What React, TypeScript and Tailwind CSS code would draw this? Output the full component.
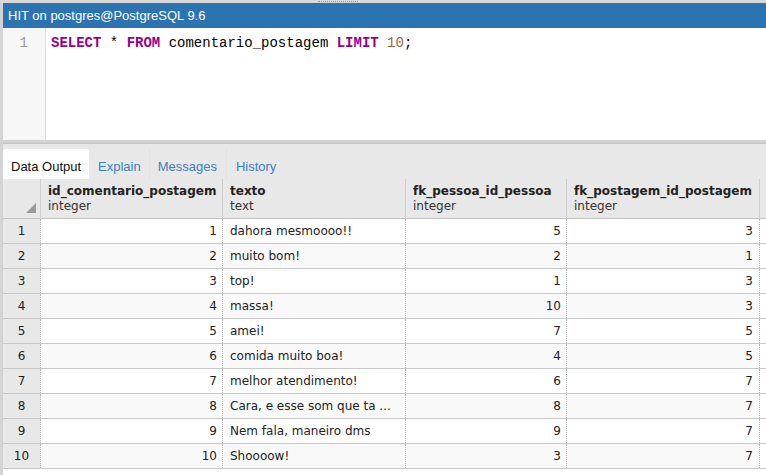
import React from 'react';

type Row = [number, string, number, number];

const rows: Row[] = [
  [1, 'dahora mesmoooo!!', 5, 3],
  [2, 'muito bom!', 2, 1],
  [3, 'top!', 1, 3],
  [4, 'massa!', 10, 3],
  [5, 'amei!', 7, 5],
  [6, 'comida muito boa!', 4, 5],
  [7, 'melhor atendimento!', 6, 7],
  [8, 'Cara, e esse som que ta ...', 8, 7],
  [9, 'Nem fala, maneiro dms', 9, 7],
  [10, 'Shoooow!', 3, 7],
];

const columns = [
  { name: 'id_comentario_postagem', type: 'integer', w: 'w-[182px]' },
  { name: 'texto', type: 'text', w: 'w-[183px]' },
  { name: 'fk_pessoa_id_pessoa', type: 'integer', w: 'w-[161px]' },
  { name: 'fk_postagem_id_postagem', type: 'integer', w: 'w-[193px]' },
];

const tabs = [
  { label: 'Explain', pad: 'pl-[9px] pr-[8px] border-r border-[#e2e2e2]' },
  { label: 'Messages', pad: 'pl-[8px] pr-[9px] border-r border-[#e2e2e2]' },
  { label: 'History', pad: 'pl-[9px] pr-[8px]' },
];

export default function App() {
  return (
    <div className="w-[766px] h-[475px] overflow-hidden bg-white flex flex-col font-['Liberation_Sans',Arial,sans-serif]">
      {/* splitter strip */}
      <div className="h-[3px] bg-[#d9d9d9] flex justify-center shrink-0">
        <div className="w-[40px] ml-[-90px] mt-[1px] h-[1px] border-t border-dotted border-[#6b9be0]" />
      </div>

      <div className="flex flex-1 min-h-0">
        <div className="w-[3px] bg-[#d4d4d4] shrink-0" />
        <div className="flex-1 flex flex-col min-w-0">
          {/* title bar */}
          <div className="h-[25px] bg-[#2c74b1] text-white text-[13px] leading-[25px] pl-[5px] shrink-0">
            HIT on postgres@PostgreSQL 9.6
          </div>

          {/* editor */}
          <div className="h-[112px] flex shrink-0">
            <div className="w-[43px] bg-[#f7f7f7] border-r border-[#dddddd] text-[#999999] text-[14px] font-['Liberation_Mono',monospace] text-right pr-[17px] pt-[5px] leading-[20px]">
              1
            </div>
            <div className="pl-[5px] pt-[5px] leading-[20px] text-[14px] font-['Liberation_Mono',monospace] text-black whitespace-pre">
              <span className="font-bold text-[#990088]">SELECT</span>
              {' * '}
              <span className="font-bold text-[#990088]">FROM</span>
              {' comentario_postagem '}
              <span className="font-bold text-[#990088]">LIMIT</span>{' '}
              <span className="text-[#996644]">10</span>;
            </div>
          </div>

          {/* panel splitter */}
          <div className="h-[3px] bg-[#d2d2d2] shrink-0" />

          {/* tabs */}
          <div className="h-[36px] bg-[#e8e8e8] border-t border-[#c4c4c4] flex items-end shrink-0 text-[13px]">
            <div className="h-[30px] w-[86px] bg-white rounded-t-[3px] text-[#111] pt-[5px] leading-[25px] pl-[8px]">
              Data Output
            </div>
            {tabs.map((t) => (
              <div key={t.label} className={`h-[30px] pt-[5px] leading-[25px] text-[#3d7fc1] ${t.pad}`}>
                {t.label}
              </div>
            ))}
          </div>

          {/* grid */}
          <div className="flex-1 font-['DejaVu_Sans',Verdana,sans-serif] text-[12px] text-[#222]">
            <div className="flex h-[40px] bg-[#e8e8e8] border-b border-[#c4c4c4]">
              <div className="w-[38px] border-r border-[#cfcfcf] relative shrink-0">
                <div className="absolute right-[4px] bottom-[5px] w-0 h-0 border-l-[10px] border-l-transparent border-b-[10px] border-b-[#9a9a9a]" />
              </div>
              {columns.map((c) => (
                <div key={c.name} className={`${c.w} shrink-0 border-r border-[#cfcfcf] pl-[7px] pt-[5px] leading-[15px]`}>
                  <div className="font-bold">{c.name}</div>
                  <div className="text-[#333]">{c.type}</div>
                </div>
              ))}
            </div>
            {rows.map((r, i) => (
              <div
                key={r[0]}
                className={`flex h-[25px] leading-[24px] border-b border-[#c8c8c8] ${i % 2 === 1 ? 'bg-[#f9f9f9]' : 'bg-white'}`}
              >
                <div className="w-[38px] shrink-0 bg-[#e8e8e8] border-r border-dotted border-[#b8b8b8] text-center">
                  {r[0]}
                </div>
                <div className="w-[182px] shrink-0 border-r border-dotted border-[#b8b8b8] text-right pr-[5px]">{r[0]}</div>
                <div className="w-[183px] shrink-0 border-r border-dotted border-[#b8b8b8] pl-[7px] whitespace-nowrap overflow-hidden">{r[1]}</div>
                <div className="w-[161px] shrink-0 border-r border-dotted border-[#b8b8b8] text-right pr-[5px]">{r[2]}</div>
                <div className="w-[193px] shrink-0 border-r border-dotted border-[#b8b8b8] text-right pr-[6px]">{r[3]}</div>
                <div className="flex-1 bg-white" />
              </div>
            ))}
          </div>
        </div>
      </div>
    </div>
  );
}
